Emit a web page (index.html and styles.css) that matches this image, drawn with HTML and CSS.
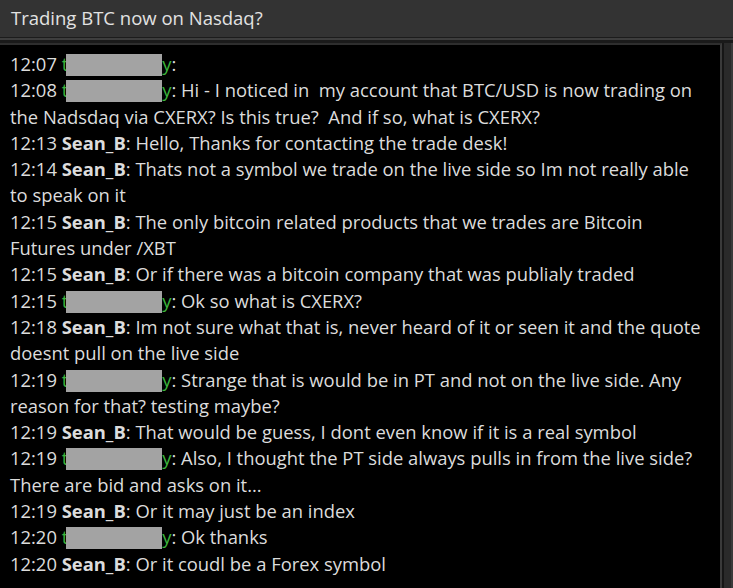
FILE: index.html
```html
<!doctype html>
<html lang="en">
  <head>
    <meta charset="utf-8">
    <title>Trading BTC now on Nasdaq?</title>
    <link rel="stylesheet" href="styles.css">
  </head>
  <body>
    <div class="title">Trading BTC now on Nasdaq?</div>
    <div class="frame">
      <div class="chat">
        <div class="msg">12:07 <span class="user">t<span class="hide"></span>y</span>:</div>
        <div class="msg">12:08 <span class="user">t<span class="hide"></span>y</span>: Hi - I noticed in&nbsp; my account that BTC/USD is now trading on the Nadsdaq via CXERX? Is this true?&nbsp; And if so, what is CXERX?</div>
        <div class="msg">12:13 <b>Sean_B</b>: Hello, Thanks for contacting the trade desk!</div>
        <div class="msg">12:14 <b>Sean_B</b>: Thats not a symbol we trade on the live side so Im not really able to speak on it</div>
        <div class="msg">12:15 <b>Sean_B</b>: The only bitcoin related products that we trades are Bitcoin Futures under /XBT</div>
        <div class="msg">12:15 <b>Sean_B</b>: Or if there was a bitcoin company that was publialy traded</div>
        <div class="msg">12:15 <span class="user">t<span class="hide"></span>y</span>: Ok so what is CXERX?</div>
        <div class="msg">12:18 <b>Sean_B</b>: Im not sure what that is, never heard of it or seen it and the quote doesnt pull on the live side</div>
        <div class="msg">12:19 <span class="user">t<span class="hide"></span>y</span>: Strange that is would be in PT and not on the live side. Any reason for that? testing maybe?</div>
        <div class="msg">12:19 <b>Sean_B</b>: That would be guess, I dont even know if it is a real symbol</div>
        <div class="msg">12:19 <span class="user">t<span class="hide"></span>y</span>: Also, I thought the PT side always pulls in from the live side? There are bid and asks on it...</div>
        <div class="msg">12:19 <b>Sean_B</b>: Or it may just be an index</div>
        <div class="msg">12:20 <span class="user">t<span class="hide"></span>y</span>: Ok thanks</div>
        <div class="msg">12:20 <b>Sean_B</b>: Or it coudl be a Forex symbol</div>
      </div>
      <div class="rail"></div>
    </div>
  </body>
</html>
```

FILE: styles.css
```css
* {
    box-sizing: border-box;
}
html, body {
    margin: 0;
    height: 100%;
    background: #141414;
    overflow: hidden;
}
body {
    font-family: 'Open Sans', sans-serif;
    color: #dcdcdc;
}

.title {
    height: 38px;
    background: #333333;
    border-bottom: 1px solid #1c1c1c;
    padding: 5px 0 0 11px;
    font-size: 18.5px;
    color: #e2e2e2;
}

.frame {
    display: flex;
    height: calc(100% - 38px);
    border-top: 2px solid #3e3e3e;
    padding-top: 3px;
    background: #1a1a1a;
}

.chat {
    flex: 1;
    background: #000;
    border-top: 2px solid #2e2e2e;
    border-right: 2px solid #3a3a3a;
    padding: 6px 10px 0 10px;
    font-size: 18.4px;
    line-height: 26.3px;
}

.rail {
    width: 11px;
    border-left: 2px solid #161616;
    border-right: 2px solid #3a3a3a;
    background: #2a2a2a;
}

.msg b {
    font-weight: bold;
}

.user {
    color: #3cb43c;
}
.hide {
    display: inline-block;
    width: 96px;
    height: 22px;
    margin-left: -2px;
    vertical-align: -5px;
    background: #a3a3a3;
}
```
